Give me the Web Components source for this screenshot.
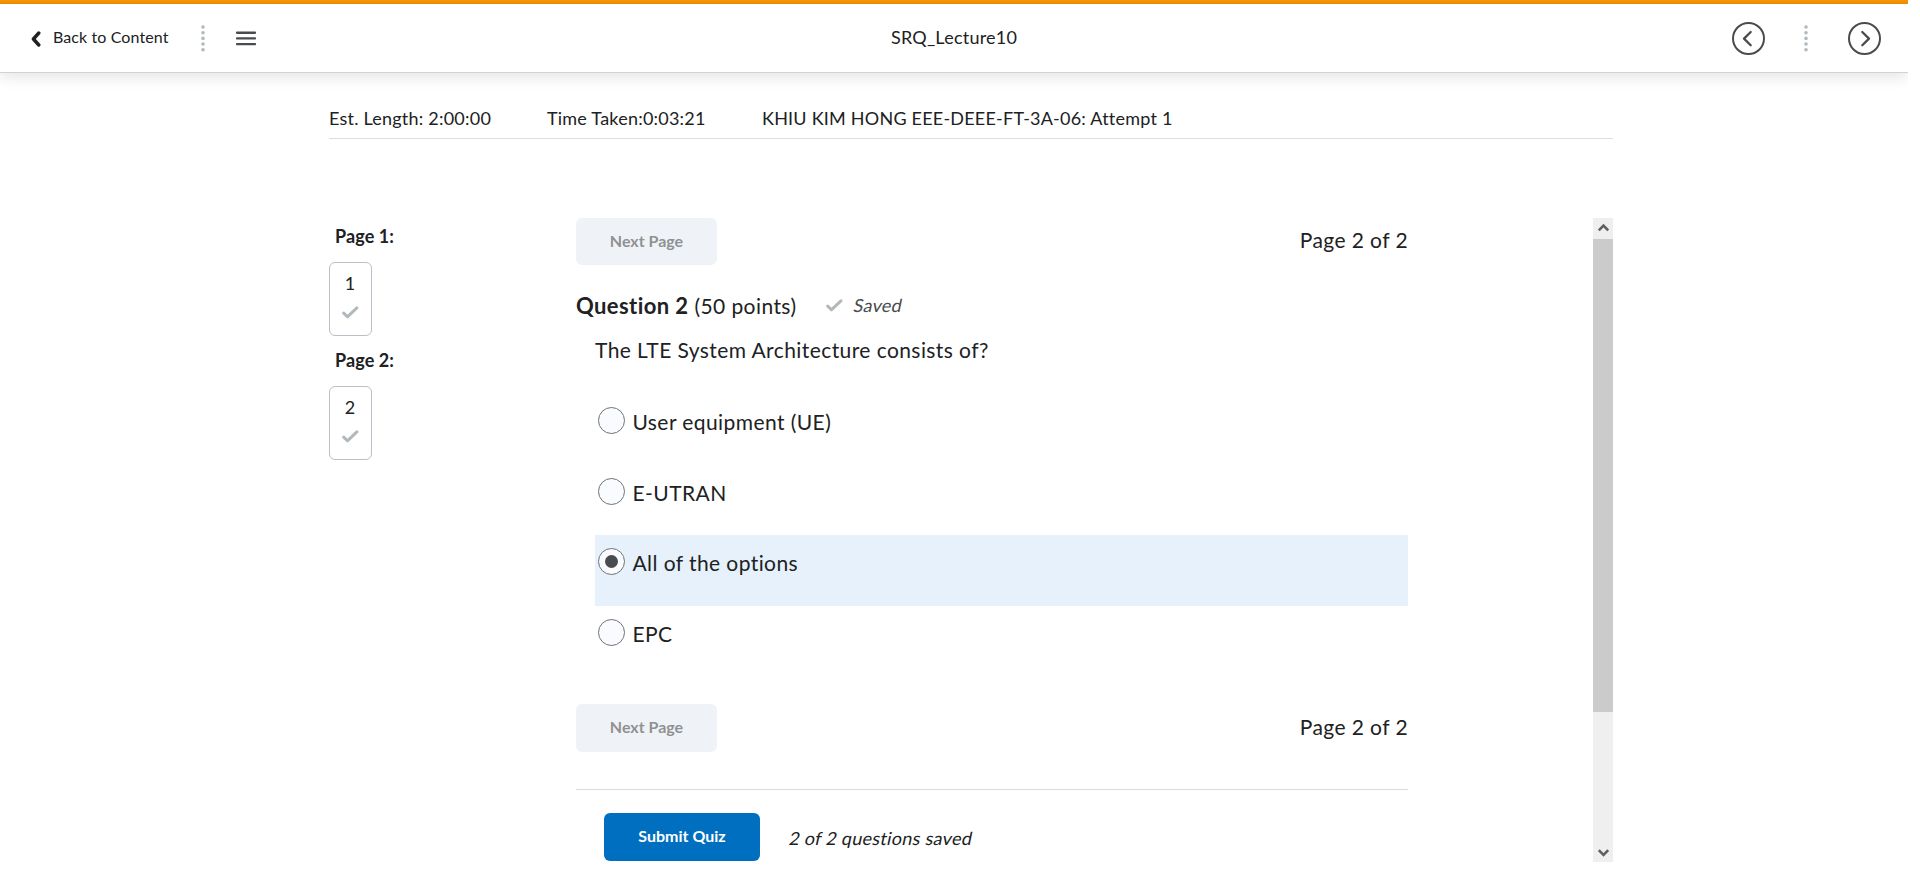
<!DOCTYPE html>
<html lang="en">
<head>
<meta charset="utf-8">
<title>SRQ_Lecture10</title>
<style>
html,body{margin:0;height:100%;background:#fff;overflow:hidden}
body{font-family:Lato,sans-serif;color:#202122;font-size:18px}
</style>
</head>
<body>
<quiz-app></quiz-app>
<script>
const define=(name,css,html)=>customElements.define(name,class extends HTMLElement{
  constructor(){super();this.attachShadow({mode:'open'}).innerHTML=`<style>*{box-sizing:border-box}${css}</style>${html(this)}`;}
});

define('dot-divider',':host{display:block;width:4px;height:27px}svg{display:block}',
()=>`<svg width="4" height="27" fill="#b1b9be"><circle cx="2" cy="2" r="1.8"/><circle cx="2" cy="7.7" r="1.8"/><circle cx="2" cy="13.4" r="1.8"/><circle cx="2" cy="19" r="1.8"/><circle cx="2" cy="24.7" r="1.8"/></svg>`);

define('check-mark',':host{display:block;width:17px;height:13px}svg{display:block}',
()=>`<svg width="17" height="13" fill="none" stroke="#b1b9be" stroke-width="3" stroke-linecap="round" stroke-linejoin="round"><path d="M1.7 7.1 5.4 10.8 14.9 1.8"/></svg>`);

define('nav-circle',':host{display:block;width:33px;height:33px}svg{display:block}',
e=>`<svg width="33" height="33" fill="none" stroke="#494c4e" stroke-width="2"><circle cx="16.5" cy="16.5" r="15.5"/><path stroke-width="2.3" stroke-linecap="round" stroke-linejoin="round" d="${e.getAttribute('dir')==='prev'?'M18.7 10 12 16.6 18.7 23.2':'M14.3 10 21 16.6 14.3 23.2'}"/></svg>`);

define('oblique-text',':host{display:inline-block;transform:skewX(-12deg);letter-spacing:.28px;white-space:nowrap}',
()=>`<span><slot></slot></span>`);

define('quiz-header',`:host{display:block;width:1908px}
.bar{height:4px;background:linear-gradient(#f99500,#e98a00)}
header{height:69px;background:#fff;border-bottom:1px solid #d0d3d6;box-shadow:0 4px 14px rgba(0,0,0,.11);clip-path:inset(0 0 -30px 0);display:grid;grid-template-columns:1fr auto 1fr;align-items:center}
.l,.r{display:flex;align-items:center}
.r{justify-content:flex-end;padding-right:27px}
.chev{margin:1px 12px 0 31px}
.back{font-size:16px;line-height:22px;padding-bottom:2px;letter-spacing:.1px}
.title{line-height:24px;padding-bottom:2px;letter-spacing:.22px}
.l dot-divider{margin:1px 31.5px 0 32px}
.r dot-divider{margin:0 40px 0 39px}
svg{display:block}`,
()=>`<div class="bar"></div><header><div class="l"><svg class="chev" width="10" height="16" fill="none" stroke="#202122" stroke-width="3.4" stroke-linecap="round" stroke-linejoin="round"><path d="M7.8 2 2.4 8 7.8 14"/></svg><span class="back">Back to Content</span><dot-divider></dot-divider><svg width="20" height="15" fill="#494c4e"><rect y="0.5" width="20" height="2.4" rx=".8"/><rect y="6.2" width="20" height="2.4" rx=".8"/><rect y="11.9" width="20" height="2.4" rx=".8"/></svg></div><div class="title">SRQ_Lecture10</div><div class="r"><nav-circle dir="prev"></nav-circle><dot-divider></dot-divider><nav-circle dir="next"></nav-circle></div></header>`);

define('quiz-info',`:host{display:flex;width:1284px;margin:33px 0 0 329px;padding-bottom:8px;border-bottom:1px solid #d8dee8;line-height:24px;letter-spacing:.22px}
span{white-space:nowrap}.a{width:218px}.b{width:215px}`,
()=>`<span class="a">Est. Length: 2:00:00</span><span class="b">Time Taken:0:03:21</span><span>KHIU KIM HONG EEE-DEEE-FT-3A-06: Attempt 1</span>`);

define('page-box',`:host{display:block;margin-bottom:11.7px}
b{display:block;line-height:24px;margin:0 0 14px 6px;letter-spacing:.1px}
div{width:43px;height:74px;border:1px solid #b9c0c7;border-radius:6px;display:flex;flex-direction:column;align-items:center;padding:8px 1px 0 0;line-height:24px}
check-mark{margin-top:11px}`,
e=>`<b>Page ${e.getAttribute('n')}:</b><div><span>${e.getAttribute('n')}</span><check-mark></check-mark></div>`);

define('quiz-button',`:host{display:flex;align-items:center;justify-content:center;width:141px;height:47px;border-radius:6px;background:#eff3f8;color:#909192;font-weight:700;font-size:16px;line-height:20px;padding-bottom:2px;box-sizing:border-box}
:host([primary]){width:156px;height:48px;background:#006fbf;color:#fff;padding-bottom:1px}`,
()=>`<span><slot></slot></span>`);

define('page-nav',`:host{display:flex;justify-content:space-between;align-items:center}
:host(.bottom) quiz-button{height:48px}
.n{font-size:21px;line-height:26px;padding-bottom:3px;letter-spacing:.42px}
:host(.bottom) .n{padding-bottom:2px}`,
()=>`<quiz-button>Next Page</quiz-button><span class="n">Page 2 of 2</span>`);

define('quiz-option',`:host{display:flex;align-items:flex-start;height:70.5px;padding:13px 0 0 3px;font-size:21px;letter-spacing:.42px}
:host([checked]){background:#e6f1fb}
i{flex:none;width:27px;height:27px;border:1px solid #6e7376;border-radius:50%;background:#f9fbff;margin-right:7.5px;display:grid;place-items:center}
:host([checked]) i::after{content:"";width:13px;height:13px;border-radius:50%;background:#494c4e}
span{line-height:26px;margin-top:2px}`,
()=>`<i></i><span><slot></slot></span>`);

define('quiz-question',`:host{display:block}
.h{display:flex;align-items:center;height:28px;line-height:28px;margin-top:27px}
b{font-size:22px;letter-spacing:.4px}.p{font-size:21px;margin-left:6px;letter-spacing:.42px;padding-bottom:1px}
check-mark{margin:0 0 1px 30px}
oblique-text{color:#494c4e;margin:0 0 3px 11px}
.q{font-size:21px;line-height:28px;margin:16px 0 30.2px 19px;letter-spacing:.42px}
.o{margin-left:19px}`,
()=>`<div class="h"><b>Question 2</b><span class="p">(50 points)</span><check-mark></check-mark><oblique-text>Saved</oblique-text></div><div class="q">The LTE System Architecture consists of?</div><div class="o"><quiz-option>User equipment (UE)</quiz-option><quiz-option>E-UTRAN</quiz-option><quiz-option checked>All of the options</quiz-option><quiz-option>EPC</quiz-option></div>`);

define('quiz-footer',`:host{display:flex;align-items:center;gap:30px;border-top:1px solid #d9dcde;padding:23px 0 0 28px;margin-top:37px}
oblique-text{line-height:24px;padding-top:3px}`,
()=>`<quiz-button primary>Submit Quiz</quiz-button><oblique-text>2 of 2 questions saved</oblique-text>`);

define('scroll-bar',`:host{display:flex;flex-direction:column;width:20px;height:644px;background:#efefef}
svg{display:block}div{height:473px;background:#cbcbcb;margin-bottom:130px}`,
()=>`<svg width="20" height="21" fill="none" stroke="#606060" stroke-width="2.6"><path d="M5.8 12.3 10.5 7.5 15.2 12.3"/></svg><div></div><svg width="20" height="20" fill="none" stroke="#606060" stroke-width="2.6"><path d="M5.8 8.2 10.5 13 15.2 8.2"/></svg>`);

define('quiz-app',`:host{display:block}
main{display:grid;grid-template-columns:247px 832px 1fr 20px;width:1284px;margin:79px 0 0 329px;height:644px}
aside{padding-top:6px}scroll-bar{grid-column:4}
.bottom{margin-top:27.8px}`,
()=>`<quiz-header></quiz-header><quiz-info></quiz-info><main><aside><page-box n="1"></page-box><page-box n="2"></page-box></aside><section><page-nav></page-nav><quiz-question></quiz-question><page-nav class="bottom"></page-nav><quiz-footer></quiz-footer></section><scroll-bar></scroll-bar></main>`);
</script>
</body>
</html>
